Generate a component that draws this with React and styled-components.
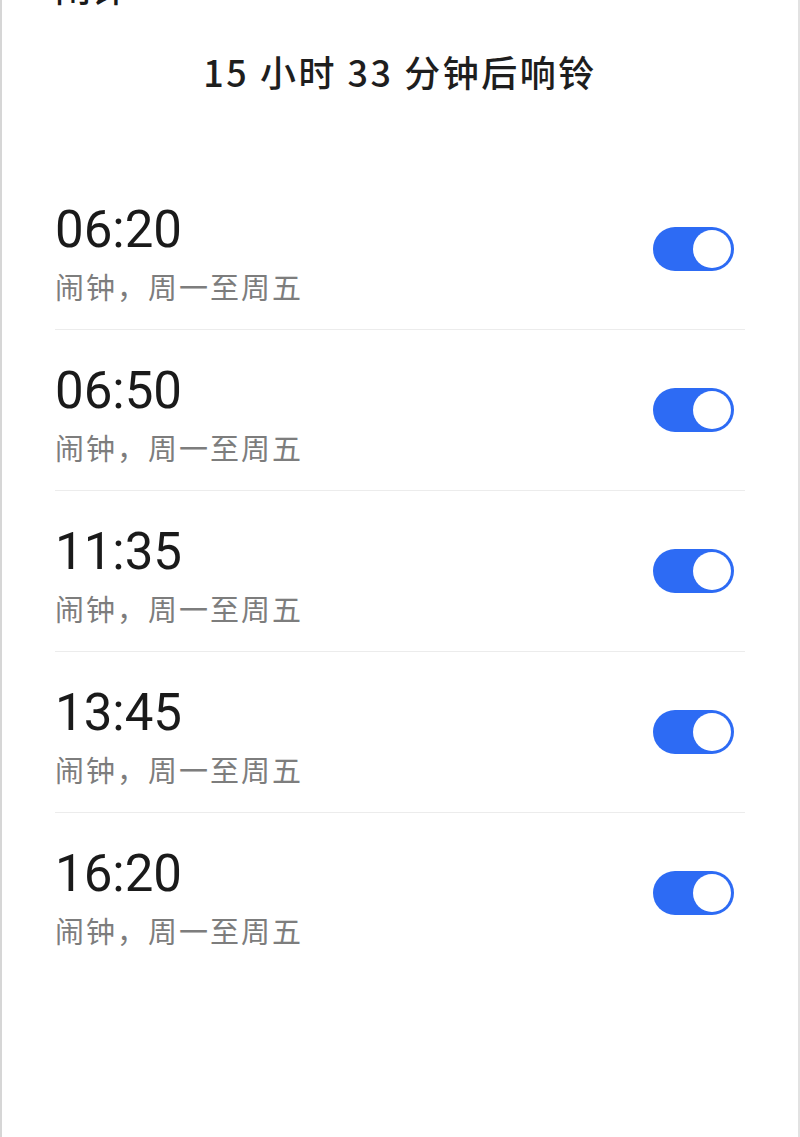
import React from 'react';
import styled, { createGlobalStyle } from 'styled-components';

const GlobalStyle = createGlobalStyle`
  html, body {
    margin: 0;
    padding: 0;
    background: #ffffff;
  }
`;

const Screen = styled.div`
  box-sizing: border-box;
  width: 800px;
  height: 1137px;
  overflow: hidden;
  border-left: 2px solid #d6d6d6;
  border-right: 2px solid #e2e2e2;
  background: #ffffff;
  font-family: Roboto, "Noto Sans CJK SC", sans-serif;
`;

const Title = styled.h1`
  margin: -34px 0 0;
  padding-left: 53px;
  font-size: 36px;
  line-height: 40px;
  font-weight: 500;
  color: #1a1a1a;
  font-family: "Noto Sans CJK SC", sans-serif;
`;

const Countdown = styled.div`
  margin-top: 40px;
  text-align: center;
  font-family: "Noto Sans CJK SC", sans-serif;
  font-size: 36px;
  line-height: 50px;
  font-weight: 500;
  letter-spacing: 2.5px;
  color: #1e1e1e;
`;

const List = styled.ul`
  list-style: none;
  margin: 73px 53px 0 53px;
  padding: 0;
`;

const Row = styled.li`
  display: flex;
  align-items: center;
  justify-content: space-between;
  height: 160px;
  padding-right: 11px;
  border-bottom: ${(p) => (p.last ? 'none' : '1px solid #ececec')};
`;

const Info = styled.div`
  display: flex;
  flex-direction: column;
  padding-top: 9px;
`;

const Time = styled.span`
  font-family: Roboto, sans-serif;
  font-size: 51px;
  line-height: 58px;
  color: #1a1a1a;
`;

const Repeat = styled.span`
  margin-top: 7px;
  font-family: "Noto Sans CJK SC", sans-serif;
  font-size: 29px;
  line-height: 40px;
  letter-spacing: 2px;
  color: #7d7d7d;
`;

const Switch = styled.button`
  position: relative;
  width: 81px;
  height: 44px;
  padding: 0;
  border: none;
  border-radius: 22px;
  background: ${(p) => (p.on ? '#2d6bf4' : '#d0d0d0')};
  cursor: pointer;

  &::after {
    content: '';
    position: absolute;
    top: 3px;
    ${(p) => (p.on ? 'right: 3px;' : 'left: 3px;')}
    width: 38px;
    height: 38px;
    border-radius: 50%;
    background: #ffffff;
  }
`;

const alarms = ['06:20', '06:50', '11:35', '13:45', '16:20'];

export default function App() {
  return (
    <>
      <GlobalStyle />
      <Screen>
        <Title>闹钟</Title>
        <Countdown>15 小时 33 分钟后响铃</Countdown>
        <List>
          {alarms.map((time, i) => (
            <Row key={time} last={i === alarms.length - 1}>
              <Info>
                <Time>{time}</Time>
                <Repeat>闹钟，周一至周五</Repeat>
              </Info>
              <Switch on aria-label={`${time} 开关`} />
            </Row>
          ))}
        </List>
      </Screen>
    </>
  );
}
